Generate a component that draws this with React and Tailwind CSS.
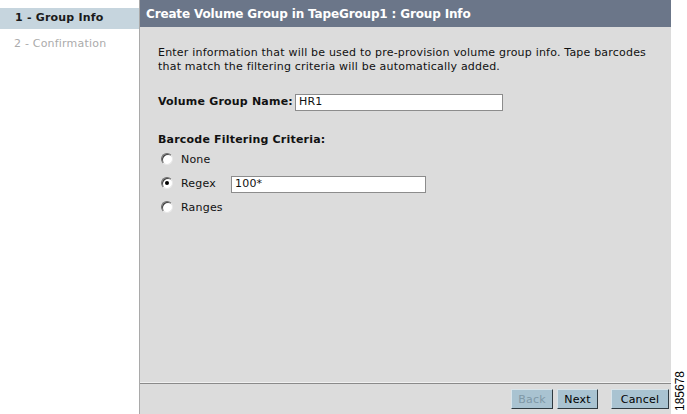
const font = { fontFamily: '"DejaVu Sans", Verdana, sans-serif' };

const Radio = ({ checked }) => (
  <span className="relative inline-block mb-[3px] w-[12px] h-[12px] rounded-full bg-white border border-t-[#6b6b6b] border-l-[#6b6b6b] border-b-[#e8e8e8] border-r-[#e8e8e8] shadow-[inset_1px_1px_0_#404040]">
    {checked && <span className="absolute left-[3px] top-[3px] w-[4px] h-[4px] rounded-full bg-black" />}
  </span>
);

const Button = ({ children, disabled, className = "" }) => (
  <button
    type="button"
    className={
      "h-[20px] bg-[#a9c3d1] border border-t-[#d8e4ea] border-l-[#d8e4ea] border-b-[#2f3a40] border-r-[#2f3a40] text-[11px] tracking-[0.2px] leading-none " +
      (disabled ? "text-[#7f98a6] " : "text-black ") +
      className
    }
  >
    {children}
  </button>
);

export default function App() {
  return (
    <div className="w-[687px] h-[414px] flex bg-white overflow-hidden" style={font}>
      {/* wizard steps */}
      <div className="w-[139px] shrink-0 pt-[8px] text-[11px] tracking-[0.2px]">
        <div className="h-[21px] bg-[#c6d5de] flex items-center pl-[15px] font-bold text-[#1a1a1a]">1 - Group Info</div>
        <div className="h-[30px] flex items-center pl-[14px] text-[#ababab]">2 - Confirmation</div>
      </div>

      <div className="w-[532px] shrink-0 flex flex-col border-l border-[#a9a9a9] bg-[#dcdcdc]">
        <div className="h-[27px] bg-[#6b7689] flex items-center pl-[6px] text-white font-bold text-[12px] tracking-[-0.15px]">
          Create Volume Group in TapeGroup1 : Group Info
        </div>

        <div className="flex-1 pl-[18px] pt-[19px] text-[11px] tracking-[0.2px] text-[#111]">
          <p className="leading-[14px] w-[500px]">
            Enter information that will be used to pre-provision volume group info. Tape barcodes
            that match the filtering criteria will be automatically added.
          </p>

          <div className="flex items-center mt-[20px] h-[17px]">
            <span className="font-bold">Volume Group Name:</span>
            <div className="ml-[2px] w-[208px] h-[17px] bg-white border border-[#8c8c8c] flex items-center px-[3px]">HR1</div>
          </div>

          <div className="font-bold mt-[21px]">Barcode Filtering Criteria:</div>

          <div className="mt-[4px] flex flex-col gap-[8px] pl-[3px]">
            <label className="flex items-center h-[16px]">
              <Radio />
              <span className="ml-[8px]">None</span>
            </label>
            <label className="flex items-center h-[16px]">
              <Radio checked />
              <span className="ml-[8px] w-[50px]">Regex</span>
              <div className="w-[195px] h-[17px] bg-white border border-[#8c8c8c] flex items-center px-[3px]">100*</div>
            </label>
            <label className="flex items-center h-[16px]">
              <Radio />
              <span className="ml-[8px]">Ranges</span>
            </label>
          </div>
        </div>

        <div className="h-[31px] border-t border-[#8a8a8a] shadow-[0_-1px_0_#f0f0f0] flex items-center justify-end pr-[2px]">
          <Button disabled className="w-[42px]">Back</Button>
          <Button className="w-[41px] ml-[4px]">Next</Button>
          <Button className="w-[58px] ml-[13px]">Cancel</Button>
        </div>
      </div>

      <div className="flex-1 flex flex-col justify-end items-center pb-[3px] pl-[2px]">
        <span
          className="[writing-mode:vertical-rl] rotate-180 text-[12px] leading-none text-black"
          style={{ fontFamily: '"Liberation Sans", Arial, sans-serif' }}
        >
          185678
        </span>
      </div>
    </div>
  );
}
